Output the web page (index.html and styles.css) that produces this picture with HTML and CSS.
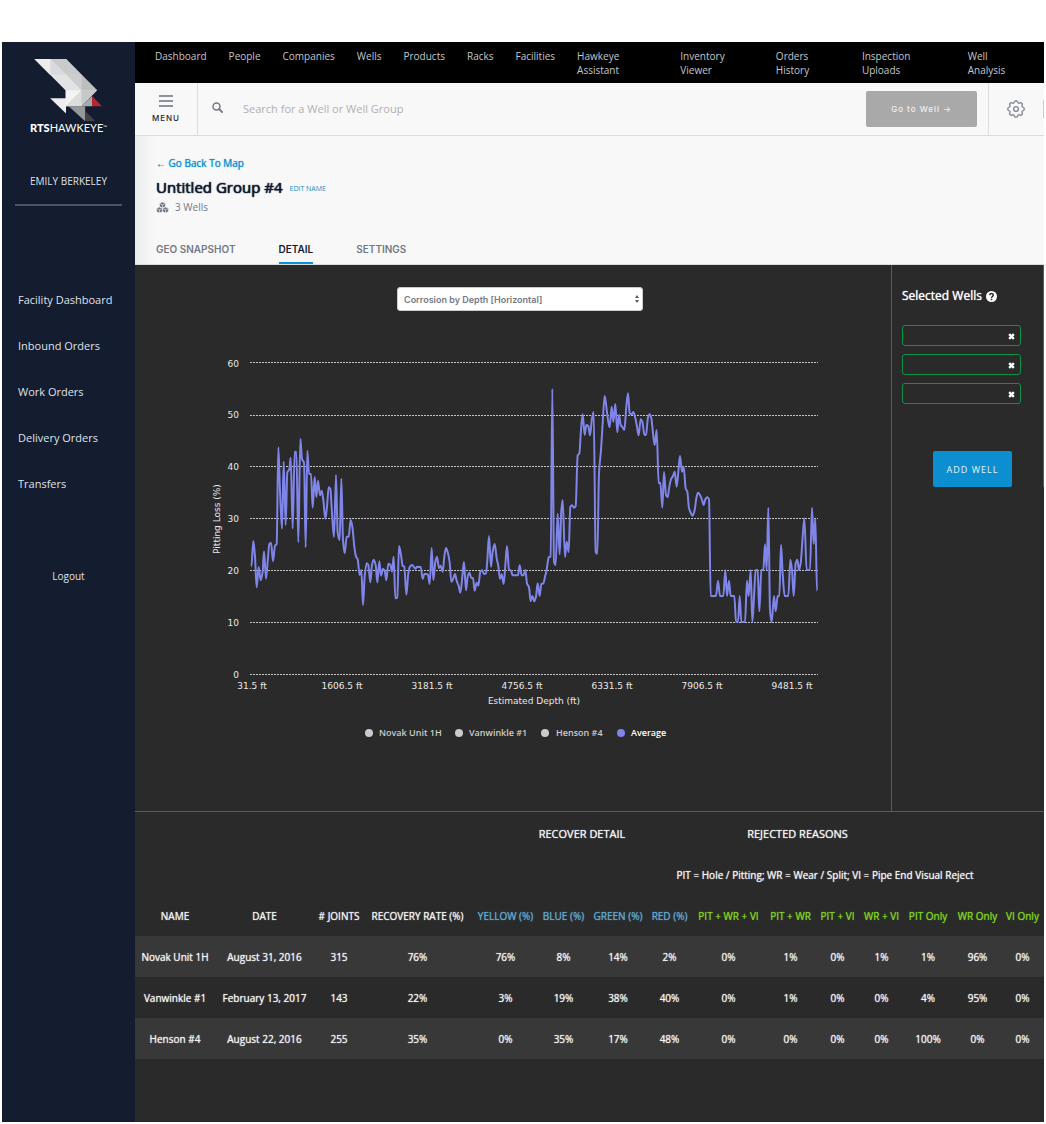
FILE: index.html
```
<!DOCTYPE html>
<html lang="en">
<head>
<meta charset="utf-8">
<title>RTS Hawkeye</title>
<link rel="stylesheet" href="styles.css">
</head>
<body>
<div class="app">
  <aside class="sidebar">
    <div class="logo">
      <svg class="logo-mark" viewBox="96 82 212 194" aria-hidden="true">
        <path fill="#dcdddf" d="M100 85h96l94 95-47 48h-48v-48z"/>
        <path fill="#ececec" d="M100 85h49v49z"/>
        <path fill="#c9cacc" d="M149 85h47l47 48h-46z"/>
        <path fill="#d9dadc" d="M149 85l48 48h-48z"/>
        <path fill="#e2e3e5" d="M149 133h48l46 47h-48z"/>
        <path fill="#cccdcf" d="M197 133h46v47z"/>
        <path fill="#bcbec0" d="M243 133l47 47h-47z"/>
        <path fill="#f3f3f3" d="M195 180h48l-48 48z"/>
        <path fill="#dcdddf" d="M243 180v48h-48z"/>
        <path fill="#c6c8ca" d="M243 180h47l-47 48z"/>
        <path fill="#a7a9ac" d="M275 197v31h-32z"/>
        <path fill="#b82632" d="M275 197l30 31h-30z"/>
        <path fill="#ededee" d="M148 204h48v46z"/>
        <path fill="#96989b" d="M204 228h50v46z"/>
        <path fill="#434346" d="M254 243l31 30h-31z"/>
      </svg>
      <div class="logo-text"><b>RTS</b>HAWKEYE<span class="tm">™</span></div>
    </div>
    <div class="user">EMILY BERKELEY</div>
    <nav class="side-nav">
      <a href="#">Facility Dashboard</a>
      <a href="#">Inbound Orders</a>
      <a href="#">Work Orders</a>
      <a href="#">Delivery Orders</a>
      <a href="#">Transfers</a>
    </nav>
    <a class="logout" href="#">Logout</a>
  </aside>

  <main class="main">
    <nav class="top-nav">
      <a href="#">Dashboard</a>
      <a href="#">People</a>
      <a href="#">Companies</a>
      <a href="#">Wells</a>
      <a href="#">Products</a>
      <a href="#">Racks</a>
      <a href="#">Facilities</a>
      <a href="#">Hawkeye Assistant</a>
      <a href="#">Inventory Viewer</a>
      <a href="#">Orders History</a>
      <a href="#">Inspection Uploads</a>
      <a href="#">Well Analysis</a>
    </nav>

    <div class="toolbar">
      <button class="menu-btn" type="button">
        <svg width="14" height="12" viewBox="0 0 14 12" aria-hidden="true"><path d="M0 1h14M0 6h14M0 11h14" stroke="#6b7080" stroke-width="1.4"/></svg>
        MENU
      </button>
      <svg class="search-icon" width="11" height="11" viewBox="0 0 11 11" aria-hidden="true"><circle cx="4.5" cy="4.5" r="3.5" fill="none" stroke="#747987" stroke-width="1.5"/><path d="M7 7l3 3" stroke="#747987" stroke-width="1.8" stroke-linecap="round"/></svg>
      <input class="search" type="text" aria-label="Search" placeholder="Search for a Well or Well Group">
      <button class="go-btn" type="button">Go to Well →</button>
      <button class="gear-btn" type="button" aria-label="Settings">
        <svg width="22" height="22" viewBox="0 0 24 24" fill="none" stroke="#858a98" stroke-width="1.5" stroke-linejoin="round" aria-hidden="true"><path d="M10.3 4.3c.4-1.8 3-1.8 3.4 0a1.7 1.7 0 0 0 2.6 1.1c1.500-.9 3.300.8 2.400 2.400a1.700 1.700 0 0 0 1.100 2.500c1.700.4 1.700 2.900 0 3.400a1.700 1.700 0 0 0-1.100 2.500c.9 1.500-.8 3.300-2.400 2.400a1.700 1.700 0 0 0-2.600 1.100c-.4 1.700-3 1.700-3.400 0a1.700 1.700 0 0 0-2.600-1.100c-1.500.9-3.300-.8-2.400-2.400a1.700 1.700 0 0 0-1.100-2.500c-1.700-.5-1.700-3 0-3.400a1.700 1.700 0 0 0 1.100-2.500c-.9-1.600.9-3.300 2.400-2.400 1 .6 2.300.1 2.600-1.100z"/><circle cx="12" cy="12" r="2.600"/></svg>
      </button>
      <span class="edge-mark"></span>
    </div>

    <header class="page-head">
      <a class="back" href="#">← Go Back To Map</a>
      <div class="title-row">
        <h1>Untitled Group #4</h1>
        <a href="#">EDIT NAME</a>
      </div>
      <div class="count">
        <svg width="13" height="11" viewBox="0 0 26 22" aria-hidden="true"><g fill="#6d7280" stroke="#f8f8f8" stroke-width="1.2" stroke-linejoin="round"><path d="M13 0l6 2.500v6.500l-6 3-6-3v-6.500z"/><path d="M7 10l6 2.500v6.500l-6 3-6-3v-6.500z"/><path d="M19 10l6 2.500v6.500l-6 3-6-3v-6.500z"/><path fill="none" d="M8 3.500l5 2 5-2M13 5.500v6M2 13.500l5 2 5-2M7 15.500v6M14 13.500l5 2 5-2M19 15.500v6"/></g></svg>
        3 Wells
      </div>
      <nav class="tabs">
        <a href="#">GEO SNAPSHOT</a>
        <a class="active" href="#">DETAIL</a>
        <a href="#">SETTINGS</a>
      </nav>
    </header>

    <section class="detail">
      <div class="chart-pane">
        <div class="select-wrap">
          <select aria-label="Chart type"><option>Corrosion by Depth [Horizontal]</option></select>
          <svg width="4" height="8" viewBox="0 0 4 8" aria-hidden="true"><path fill="#555b68" d="M2 0l2 3H0zM2 8l2-3H0z"/></svg>
        </div>
        <svg class="chart" viewBox="135 340 756 410" role="img" aria-label="Pitting loss by estimated depth">
          <g class="grid">
            <path d="M250 362.500h568M250 415.500h568M250 466.500h568M250 518.500h568M250 570.500h568M250 622.500h568M250 674.500h568"/>
          </g>
          <g class="axis y-axis">
            <text x="239" y="367">60</text>
            <text x="239" y="418">50</text>
            <text x="239" y="470">40</text>
            <text x="239" y="522">30</text>
            <text x="239" y="574">20</text>
            <text x="239" y="626">10</text>
            <text x="239" y="678">0</text>
          </g>
          <g class="axis x-axis">
            <text x="252" y="689">31.5 ft</text>
            <text x="342" y="689">1606.5 ft</text>
            <text x="432" y="689">3181.5 ft</text>
            <text x="522" y="689">4756.5 ft</text>
            <text x="612" y="689">6331.5 ft</text>
            <text x="702" y="689">7906.5 ft</text>
            <text x="792" y="689">9481.5 ft</text>
            <text x="534" y="704">Estimated Depth (ft)</text>
            <text transform="translate(220 519) rotate(-90)">Pitting Loss (%)</text>
          </g>
          <path id="average" class="series"/>
          <g class="legend">
            <circle cx="369" cy="733" r="4"/><text x="379" y="736">Novak Unit 1H</text>
            <circle cx="459" cy="733" r="4"/><text x="469" y="736">Vanwinkle #1</text>
            <circle cx="545" cy="733" r="4"/><text x="556" y="736">Henson #4</text>
            <circle class="on" cx="621" cy="733" r="4"/><text class="on" x="631" y="736">Average</text>
          </g>
        </svg>
      </div>
      <aside class="wells">
        <div class="wells-inner">
          <h2>Selected Wells
            <svg width="11" height="11" viewBox="0 0 22 22" aria-hidden="true"><circle cx="11" cy="11" r="11" fill="#fff"/><path d="M7.500 8.500c0-4.500 7-4.500 7 0 0 2.500-3.500 2.500-3.500 5.500" fill="none" stroke="#2a2a2a" stroke-width="3"/><path d="M9.500 15.500h3v3h-3z" fill="#2a2a2a"/></svg>
          </h2>
          <ul>
            <li><button type="button" aria-label="Remove well"><svg width="7" height="7" viewBox="0 0 6 6"><path d="M1 1l4 4M5 1L1 5" stroke="#fff" stroke-width="2"/></svg></button></li>
            <li><button type="button" aria-label="Remove well"><svg width="7" height="7" viewBox="0 0 6 6"><path d="M1 1l4 4M5 1L1 5" stroke="#fff" stroke-width="2"/></svg></button></li>
            <li><button type="button" aria-label="Remove well"><svg width="7" height="7" viewBox="0 0 6 6"><path d="M1 1l4 4M5 1L1 5" stroke="#fff" stroke-width="2"/></svg></button></li>
          </ul>
          <button class="add-btn" type="button">ADD WELL</button>
        </div>
      </aside>
    </section>

    <section class="table-wrap">
      <table>
        <colgroup>
          <col class="c-name"><col class="c-date"><col class="c-joints"><col class="c-rate"><col class="c-yellow"><col class="c-short"><col class="c-green"><col class="c-tight"><col class="c-pwv"><col class="c-short"><col class="c-short"><col class="c-tight"><col class="c-pit"><col class="c-short"><col>
        </colgroup>
        <thead>
          <tr class="group"><th colspan="4"></th><th colspan="4">RECOVER DETAIL</th><th colspan="4">REJECTED REASONS</th><th colspan="3"></th></tr>
          <tr><th colspan="7"></th><th colspan="7">PIT = Hole / Pitting; WR = Wear / Split; VI = Pipe End Visual Reject</th><th></th></tr>
          <tr>
            <th>NAME</th><th>DATE</th><th># JOINTS</th><th>RECOVERY RATE (%)</th>
            <th class="blue">YELLOW (%)</th><th class="blue">BLUE (%)</th><th class="blue">GREEN (%)</th><th class="blue">RED (%)</th>
            <th class="green">PIT + WR + VI</th><th class="green">PIT + WR</th><th class="green">PIT + VI</th><th class="green">WR + VI</th><th class="green">PIT Only</th><th class="green">WR Only</th><th class="green">VI Only</th>
          </tr>
        </thead>
        <tbody>
          <tr><td>Novak Unit 1H</td><td>August 31, 2016</td><td>315</td><td>76%</td><td>76%</td><td>8%</td><td>14%</td><td>2%</td><td>0%</td><td>1%</td><td>0%</td><td>1%</td><td>1%</td><td>96%</td><td>0%</td></tr>
          <tr><td>Vanwinkle #1</td><td>February 13, 2017</td><td>143</td><td>22%</td><td>3%</td><td>19%</td><td>38%</td><td>40%</td><td>0%</td><td>1%</td><td>0%</td><td>0%</td><td>4%</td><td>95%</td><td>0%</td></tr>
          <tr><td>Henson #4</td><td>August 22, 2016</td><td>255</td><td>35%</td><td>0%</td><td>35%</td><td>17%</td><td>48%</td><td>0%</td><td>0%</td><td>0%</td><td>0%</td><td>100%</td><td>0%</td><td>0%</td></tr>
        </tbody>
      </table>
    </section>
  </main>
</div>
<script src="chart.js"></script>
</body>
</html>
```
FILE: styles.css
```
* { box-sizing: border-box; }

body {
  margin: 0;
  background: #fff;
  font-family: "Open Sans", "Noto Sans", sans-serif;
  font-size: 10px;
}

a { color: inherit; text-decoration: none; }
button { font-family: inherit; padding: 0; border: 0; background: none; cursor: pointer; }
svg { display: block; flex: none; }

.app {
  display: flex;
  min-height: 100vh;
  padding: 42px 2px 2px;
}

/* Sidebar */
.sidebar {
  flex: none;
  display: flex;
  flex-direction: column;
  width: 133px;
  padding: 16px 13px;
  background: #141c30;
  color: #dfe2e8;
}

.logo { display: flex; flex-direction: column; align-items: center; }
.logo-mark { width: 70px; height: 64px; margin-right: 2px; }
.logo-text {
  font-family: Lato, sans-serif;
  font-size: 11px;
  line-height: 11px;
  color: #fff;
}
.logo-text b { font-weight: 900; }
.tm { font-size: 5px; vertical-align: top; }

.user {
  margin-top: 40px;
  padding-bottom: 15px;
  border-bottom: 2px solid #4b5261;
  line-height: 16px;
  text-align: center;
}

.side-nav {
  display: flex;
  flex-direction: column;
  gap: 30px;
  margin-top: 86px;
  padding-left: 3px;
  font-size: 11px;
  line-height: 16px;
}

.logout { margin-top: 76px; line-height: 16px; text-align: center; }

/* Top navigation */
.main { flex: 1; min-width: 0; display: flex; flex-direction: column; background: #2a2a2a; }

.top-nav {
  display: flex;
  gap: 22px;
  height: 41px;
  padding: 7px 20px 0;
  background: #000;
  color: #c4c7cb;
  line-height: 14px;
}

/* Search bar */
.toolbar {
  display: flex;
  align-items: center;
  height: 53px;
  background: #f8f8f8;
  border-bottom: 1px solid #dcdcdc;
}
.menu-btn {
  display: flex;
  flex-direction: column;
  align-items: center;
  gap: 6px;
  width: 63px;
  height: 52px;
  padding-top: 12px;
  border-right: 1px solid #dcdcdc;
  font-family: Inter, sans-serif;
  font-size: 8px;
  font-weight: 500;
  line-height: 10px;
  letter-spacing: 1px;
  color: #22283a;
}
.search-icon { margin: 0 20px 4px 14px; }
.search {
  flex: 1;
  min-width: 0;
  height: 30px;
  padding: 0 0 2px;
  border: 0;
  outline: 0;
  background: none;
  font: 11px "Open Sans", sans-serif;
}
.search::placeholder { color: #b0b0b0; opacity: 1; }
.go-btn {
  width: 111px;
  height: 36px;
  margin-right: 11px;
  border-radius: 2px;
  background: #a9a9a9;
  color: #f0f0f0;
  font-family: Inter, sans-serif;
  font-size: 8px;
  font-weight: 500;
  letter-spacing: 1px;
}
.gear-btn {
  display: flex;
  align-items: center;
  justify-content: center;
  width: 55px;
  height: 52px;
  border-left: 1px solid #dcdcdc;
}
.edge-mark { width: 1px; height: 18px; background: #ccc; }

/* Page heading */
.page-head {
  padding: 19px 21px 0;
  border-bottom: 1px solid #dcdcdc;
  background: linear-gradient(90deg, #ececec, #f8f8f8 20px);
  color: #747987;
}
.back {
  display: block;
  line-height: 16px;
  color: #0e90d2;
  text-shadow: 0 0 1px #0e90d2;
}
.title-row { display: flex; align-items: center; gap: 7px; margin-top: 4px; }
.title-row h1 {
  margin: 0;
  font-size: 15px;
  font-weight: 400;
  line-height: 24px;
  color: #141c30;
  text-shadow: 0 0 1px #141c30, 0 0 1px #141c30;
}
.title-row a { padding-top: 2px; font-size: 7px; color: #0e90d2; }
.count { display: flex; align-items: center; gap: 6px; line-height: 16px; }
.tabs {
  display: flex;
  gap: 43px;
  margin-top: 26px;
  font-family: Inter, sans-serif;
  font-size: 10px;
  font-weight: 600;
  line-height: 16px;
}
.tabs a { padding-bottom: 5px; border-bottom: 2px solid transparent; }
.tabs .active { border-color: #0e90d2; color: #141c30; }

/* Chart and selected wells */
.detail {
  display: flex;
  min-height: 547px;
  border-bottom: 1px solid #5a5a5a;
  color: #fff;
}
.chart-pane {
  flex: 1;
  min-width: 0;
  display: flex;
  flex-direction: column;
  align-items: center;
  padding-top: 22px;
}
.select-wrap { display: flex; align-items: center; width: 246px; margin-left: 14px; }
.select-wrap select {
  width: 100%;
  height: 24px;
  padding: 0 6px;
  border: 1px solid #ccc;
  border-radius: 3px;
  background: #fff;
  appearance: none;
  font: 600 9px Inter, sans-serif;
  color: #747987;
}
.select-wrap svg { margin-left: -8px; pointer-events: none; }
.chart { width: 100%; margin-top: 29px; }
.chart text { font-family: "DejaVu Sans", sans-serif; font-size: 9px; fill: #e8e8e8; }
.grid path { stroke: #c4c4c4; stroke-width: 1; stroke-dasharray: 2 1; fill: none; }
.y-axis text { text-anchor: end; }
.x-axis text { text-anchor: middle; }
.series { fill: none; stroke: #8085e9; stroke-width: 2; stroke-linejoin: round; }
.legend circle { fill: #ccc; }
.legend .on { fill: #8085e9; }
.chart .legend text { font-family: "Open Sans", sans-serif; font-weight: 600; fill: #ccc; }
.chart .legend text.on { fill: #fff; }

.wells { flex: none; width: 153px; border-left: 1px solid #5a5a5a; }
.wells-inner {
  display: flex;
  flex-direction: column;
  height: 222px;
  padding: 22px 22px 0 10px;
  border-right: 1px solid #5a5a5a;
}
.wells h2 {
  display: flex;
  align-items: center;
  gap: 4px;
  margin: 0;
  font-size: 12px;
  font-weight: 400;
  line-height: 18px;
  text-shadow: 0 0 1px #fff;
}
.wells ul {
  display: flex;
  flex-direction: column;
  gap: 8px;
  margin: 20px 0 47px;
  padding: 0;
  list-style: none;
}
.wells li {
  display: flex;
  align-items: center;
  justify-content: flex-end;
  height: 21px;
  padding: 2px 5px 0 0;
  border: 1px solid #0f9246;
  border-radius: 3px;
}
.add-btn {
  align-self: flex-end;
  flex: none;
  width: 79px;
  height: 36px;
  margin-right: 9px;
  border-radius: 2px;
  background: #0b8fd0;
  color: #e6f3fa;
  font-size: 9px;
  letter-spacing: 1px;
}

/* Results table */
.table-wrap { padding: 1px 0 61px; color: #f2f2f2; }
table { width: 100%; border-collapse: collapse; table-layout: fixed; }
th, td {
  height: 41px;
  padding: 0;
  font-size: 10px;
  font-weight: 400;
  line-height: 16px;
  text-align: center;
  white-space: nowrap;
  text-shadow: 0 0 1px currentColor;
}
.group th { padding-left: 3px; font-size: 11px; }
tbody tr:nth-child(odd) { background: #383838; }
.blue { color: #5fa9cf; }
.green { color: #7ed321; }
.c-name { width: 80px; }
.c-date { width: 99px; }
.c-joints { width: 50px; }
.c-rate { width: 107px; }
.c-yellow { width: 69px; }
.c-green { width: 62px; }
.c-pwv { width: 77px; }
.c-pit { width: 52px; }
.c-short { width: 47px; }
.c-tight { width: 41px; }
```
FILE: chart.js
```
const ORIGIN = { x: 200, y: 340 };
const SAMPLES = `154,680 160,603 165,650 170,742 176,681 182,721 188,695 192,634 198,716 203,665 208,612 213,608 219,664 225,617 230,612 235,322 240,450 246,566 251,365 257,555 262,397 268,388 272,353 278,566 284,335 289,335 295,607 301,296 306,357 312,368 317,622 322,332 327,402 333,402 338,503 344,411 349,471 354,422 360,466 365,452 370,480 376,536 381,500 386,442 391,447 396,520 402,591 408,405 413,578 419,600 424,416 429,600 434,640 440,590 446,590 452,540 457,560 463,620 468,650 473,658 479,705 484,690 489,795 494,710 500,670 505,675 511,727 516,675 521,659 527,675 532,727 538,664 543,707 549,686 554,692 559,721 565,671 571,674 576,695 581,650 586,775 592,773 597,618 603,645 608,678 613,680 619,764 625,700 630,680 636,675 641,680 646,686 652,680
662,681 668,717 673,702 679,702 684,705 689,732 695,624 700,720 706,666 711,650 717,684 722,677 728,695 733,650 738,624 744,640 749,668 754,726 760,715 765,702 770,722 776,738 781,758 787,710 792,666 798,751 803,710 808,698 814,714 819,714 824,752 830,728 835,737 841,695 846,691 852,702 858,700 862,660 867,588 873,680 878,635 884,612 890,655 895,678 900,717 905,703 911,732 916,675 921,618 927,688 933,692 938,706 954,706 959,676 965,706 970,706 976,690 981,730 987,742 992,784 997,768 1003,784 1008,770 1013,730 1019,768 1024,732 1030,730 1036,706 1040,690 1046,652 1052,650 1057,147 1062,665 1067,675 1073,521 1079,643 1084,510 1088,480 1095,651 1100,605 1106,636 1111,500 1116,496 1122,503 1127,498 1133,346 1138,340 1143,270 1148,223 1154,285 1159,255 1165,258 1170,286 1176,235 1181,216 1187,636 1192,641 1197,400 1203,330 1208,250 1214,168 1219,200 1224,240 1229,262 1235,200 1240,245 1246,192 1252,277 1257,224
1262,255 1268,262 1273,270 1279,200 1284,160 1289,220 1295,223 1300,216 1306,235 1311,260 1316,286 1322,238 1327,245 1333,283 1338,285 1344,232 1349,223 1354,235 1359,280 1364,315 1370,270 1376,430 1381,428 1387,503 1392,396 1398,465 1403,472 1408,440 1413,418 1419,408 1424,395 1430,440 1435,395 1440,348 1446,395 1451,380 1457,445 1462,455 1467,505 1473,520 1478,527 1484,510 1489,475 1494,458 1500,465 1506,480 1511,495 1516,478 1522,472 1527,478 1532,768 1548,768 1554,722 1560,768 1570,768 1576,690 1581,768 1587,722 1592,768 1603,768 1608,846 1614,846 1619,768 1624,846 1635,846 1641,722 1646,768 1652,690 1657,846 1662,770 1667,690 1673,690 1678,814 1684,690 1690,690 1695,613 1700,690 1705,503 1710,810 1715,846 1722,768 1727,814 1733,768 1738,768 1743,614 1748,700 1754,768 1765,768 1771,659 1776,690 1781,768 1787,670 1792,659 1797,690 1802,670 1808,590 1813,535 1820,690 1830,690 1836,503 1841,612 1846,535 1851,753`;

const points = SAMPLES.split(/\s+/).map(pair => {
  const [x, y] = pair.split(",").map(Number);
  return [ORIGIN.x + x / 3, ORIGIN.y + y / 3];
});

// Monotone tangents: flat at every peak and trough.
const slope = points.map((p, i) => {
  const a = points[i - 1];
  const b = points[i + 1];
  if (!a || !b) return 0;
  const left = (p[1] - a[1]) / (p[0] - a[0]);
  const right = (b[1] - p[1]) / (b[0] - p[0]);
  return left * right <= 0 ? 0 : (2 * left * right) / (left + right);
});

let d = `M${points[0][0]} ${points[0][1]}`;
for (let i = 1; i < points.length; i++) {
  const [x0, y0] = points[i - 1];
  const [x1, y1] = points[i];
  const h = (x1 - x0) / 3;
  d += `C${x0 + h} ${y0 + slope[i - 1] * h} ${x1 - h} ${y1 - slope[i] * h} ${x1} ${y1}`;
}
document.getElementById("average").setAttribute("d", d);
```
